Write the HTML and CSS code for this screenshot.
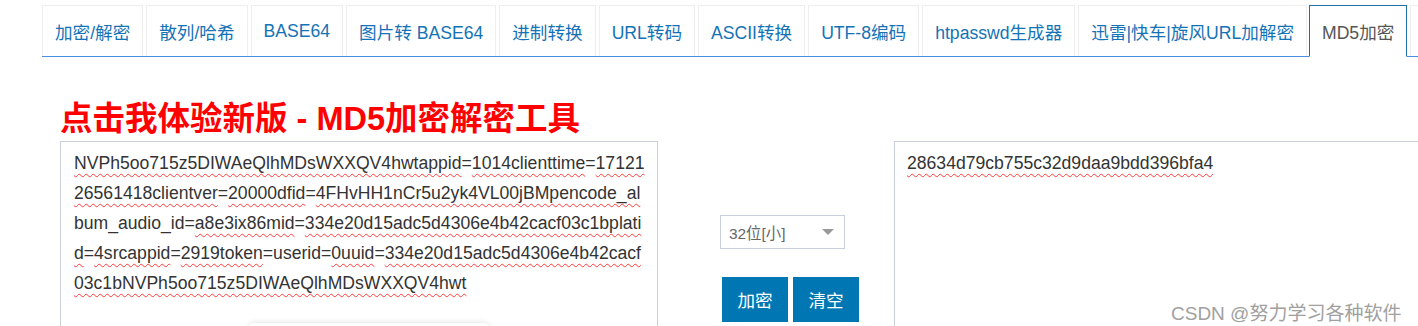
FILE: index.html
```html
<!DOCTYPE html>
<html lang="zh-CN">
<head>
<meta charset="utf-8">
<title>MD5加密</title>
<link rel="stylesheet" href="styles.css">
</head>
<body>
<div class="page">
  <ul class="tabs">
    <li class="tab"><a href="#">加密/解密</a></li>
    <li class="tab"><a href="#">散列/哈希</a></li>
    <li class="tab"><a href="#">BASE64</a></li>
    <li class="tab"><a href="#">图片转 BASE64</a></li>
    <li class="tab"><a href="#">进制转换</a></li>
    <li class="tab"><a href="#">URL转码</a></li>
    <li class="tab"><a href="#">ASCII转换</a></li>
    <li class="tab"><a href="#">UTF-8编码</a></li>
    <li class="tab"><a href="#">htpasswd生成器</a></li>
    <li class="tab"><a href="#">迅雷|快车|旋风URL加解密</a></li>
    <li class="tab active"><a href="#">MD5加密</a></li>
    <li class="tab"><a href="#"></a></li>
  </ul>

  <div class="content">
    <h1 class="promo">点击我体验新版 - MD5加密解密工具</h1>
    <div class="workspace">
      <div class="textbox source">
        <span class="err">NVPh5oo715z5DIWAeQlhMDsWXXQV4hwtappid</span>=<span class="err">1014clienttime</span>=<span class="err">17121</span><br>
        <span class="err">26561418clientver</span>=<span class="err">20000dfid</span>=<span class="err">4FHvHH1nCr5u2yk4VL00jBMpencode_al</span><br>
        bum_audio_id=<span class="err">a8e3ix86mid</span>=<span class="err">334e20d15adc5d4306e4b42cacf03c1bplati</span><br>
        <span class="err">d</span>=<span class="err">4srcappid</span>=<span class="err">2919token</span>=userid=<span class="err">0uuid</span>=<span class="err">334e20d15adc5d4306e4b42cacf</span><br>
        <span class="err">03c1bNVPh5oo715z5DIWAeQlhMDsWXXQV4hwt</span>
      </div>
      <div class="controls">
        <div class="select">
          <span class="select-text">32位[小]</span>
          <span class="caret"></span>
        </div>
        <div class="buttons">
          <button class="btn">加密</button>
          <button class="btn">清空</button>
        </div>
      </div>
      <div class="textbox result">
        <span class="err">28634d79cb755c32d9daa9bdd396bfa4</span>
      </div>
    </div>
    <div class="popup-edge"></div>
  </div>
  <div class="watermark">CSDN @努力学习各种软件</div>
</div>
</body>
</html>
```

FILE: styles.css
```css
* { box-sizing: border-box; }

html, body {
  margin: 0;
  padding: 0;
  width: 1418px;
  height: 326px;
  overflow: hidden;
  background: #fff;
}

body {
  font-family: "Liberation Sans", "Noto Sans CJK SC", sans-serif;
  font-size: 17.6px;
  color: #333;
}

.page {
  position: relative;
  height: 326px;
  overflow: hidden;
}

/* ---------- tabs ---------- */
.tabs {
  list-style: none;
  margin: 5px 0 0 42px;
  padding: 0;
  display: flex;
  flex-wrap: nowrap;
  border-bottom: 1px solid #4a90e2;
  width: 1500px;
}

.tab {
  flex-shrink: 0;
  margin-right: 3px;
}

.tab a {
  display: flex;
  align-items: center;
  height: 51px;
  min-width: 60px;
  padding: 0 12px;
  border: 1px solid #eee;
  border-bottom: none;
  color: #1473b6;
  text-decoration: none;
  font-size: 17.6px;
  white-space: nowrap;
}

.tab.active {
  margin-bottom: -1px;
  margin-left: -1px;
}

.tab.active a {
  height: 52px;
  border: 1px solid #226fa6;
  border-bottom: 1px solid #fff;
  color: #555;
}

/* ---------- content ---------- */
.content {
  position: relative;
  padding-left: 60px;
}

.promo {
  margin: 0;
  padding-top: 42px;
  height: 84px;
  font-size: 32.5px;
  line-height: 40px;
  font-weight: bold;
  color: #ff0000;
  white-space: nowrap;
}

.workspace {
  display: grid;
  grid-template-columns: 598px 236px 560px;
  align-items: start;
}

.textbox {
  height: 220px;
  border: 1px solid #c9d0dc;
  padding: 6px 13px;
  line-height: 30px;
  font-size: 17.6px;
  color: #333;
  background: #fff;
  white-space: nowrap;
  overflow: hidden;
}

.err {
  text-decoration: underline wavy #ff3b3b;
  text-decoration-thickness: 1px;
  text-underline-offset: 4px;
  text-decoration-skip-ink: none;
}

.controls {
  padding-left: 62px;
  padding-top: 74px;
}

.select {
  width: 125px;
  height: 34px;
  border: 1px solid #c9d0dc;
  display: flex;
  align-items: center;
  justify-content: space-between;
  padding: 0 10px 0 8px;
  font-size: 15.4px;
  color: #666;
  background: #fff;
}

.caret {
  width: 0;
  height: 0;
  border-left: 6px solid transparent;
  border-right: 6px solid transparent;
  border-top: 6px solid #999;
}

.buttons {
  display: flex;
  gap: 5px;
  margin-top: 28px;
  margin-left: 2px;
}

.btn {
  width: 66px;
  height: 45px;
  border: none;
  background: #0077b3;
  color: #fff;
  font-family: "Liberation Sans", "Noto Sans CJK SC", sans-serif;
  font-size: 17.6px;
  padding: 0;
}

.result {
  padding-left: 12px;
}

/* faint edge of a floating panel peeking at the bottom */
.popup-edge {
  position: absolute;
  left: 248px;
  top: 266px;
  width: 242px;
  height: 60px;
  background: #fff;
  box-shadow: 0 -1px 5px rgba(0, 0, 0, 0.10);
  border-radius: 6px 6px 0 0;
}

.watermark {
  position: absolute;
  left: 1171px;
  top: 298px;
  font-size: 19px;
  color: #a0a0a0;
  white-space: nowrap;
}
```
